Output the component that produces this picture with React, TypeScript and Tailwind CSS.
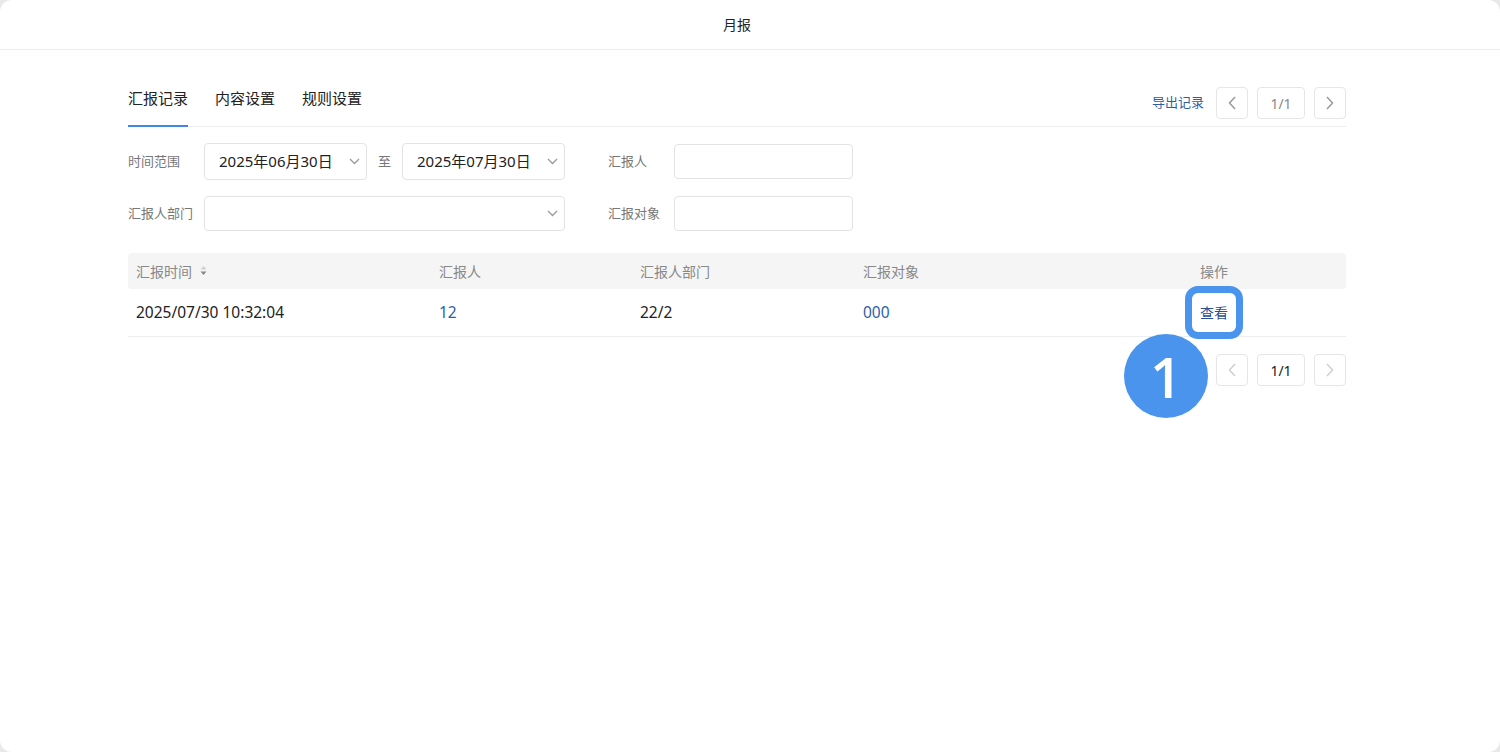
import React from "react";

const font = { fontFamily: '"Noto Sans", "Noto Sans CJK SC", sans-serif' };

function Chevron({ dir, color }: { dir: "left" | "right" | "down"; color: string }) {
  if (dir === "down") {
    return (
      <svg width="11" height="7" viewBox="0 0 11 7" fill="none">
        <path d="M1 1l4.5 4.5L10 1" stroke={color} strokeWidth="1.3" />
      </svg>
    );
  }
  return (
    <svg width="8" height="14" viewBox="0 0 8 14" fill="none">
      {dir === "left" ? (
        <path d="M7 1L1.5 7 7 13" stroke={color} strokeWidth="1.5" />
      ) : (
        <path d="M1 1l5.5 6L1 13" stroke={color} strokeWidth="1.5" />
      )}
    </svg>
  );
}

function Pager({ textColor, chevColor }: { textColor: string; chevColor: string }) {
  return (
    <div className="flex items-center gap-[9px]">
      <div className="w-[32px] h-[32px] border border-[#e6e6e6] rounded-[4px] flex items-center justify-center">
        <Chevron dir="left" color={chevColor} />
      </div>
      <div className={`w-[48px] h-[32px] border border-[#e6e6e6] rounded-[4px] flex items-center justify-center text-[14px] ${textColor}`}>
        1/1
      </div>
      <div className="w-[32px] h-[32px] border border-[#e6e6e6] rounded-[4px] flex items-center justify-center">
        <Chevron dir="right" color={chevColor} />
      </div>
    </div>
  );
}

export default function App() {
  return (
    <div className="w-[1500px] h-[752px] bg-[#e9e9e9]" style={font}>
      <div className="w-full h-full bg-white rounded-[12px] overflow-hidden">
        <div className="h-[50px] border-b border-[#ececec] flex items-center justify-center pr-[26px] text-[14px] text-[#222]">
          月报
        </div>
        <div className="pl-[128px] pr-[154px] pt-[37px]">
          <div className="flex items-start justify-between border-b border-[#eeeeee]">
            <div className="flex gap-[27px]">
              <div className="text-[15px] leading-[22px] pb-[16px] text-[#222] border-b-2 border-[#3f86ee] -mb-px">汇报记录</div>
              <div className="text-[15px] leading-[22px] pb-[16px] text-[#222]">内容设置</div>
              <div className="text-[15px] leading-[22px] pb-[16px] text-[#222]">规则设置</div>
            </div>
            <div className="flex items-center">
              <span className="text-[13px] text-[#2d5fa8] mr-[12px]">导出记录</span>
              <Pager textColor="text-[#888]" chevColor="#9a9a9a" />
            </div>
          </div>

          <div className="mt-[16px] flex items-center">
            <div className="w-[76px] text-[13px] text-[#777]">时间范围</div>
            <div className="w-[163px] h-[37px] border border-[#e3e3e3] rounded-[4px] flex items-center justify-between pl-[14px] pr-[6px] text-[15px] text-[#222]">
              <span>2025年06月30日</span>
              <Chevron dir="down" color="#999" />
            </div>
            <div className="w-[35px] text-center text-[13px] text-[#777]">至</div>
            <div className="w-[163px] h-[37px] border border-[#e3e3e3] rounded-[4px] flex items-center justify-between pl-[14px] pr-[6px] text-[15px] text-[#222]">
              <span>2025年07月30日</span>
              <Chevron dir="down" color="#999" />
            </div>
            <div className="w-[43px]" />
            <div className="w-[66px] text-[13px] text-[#777]">汇报人</div>
            <div className="w-[179px] h-[35px] border border-[#e3e3e3] rounded-[4px]" />
          </div>

          <div className="mt-[16px] flex items-center">
            <div className="w-[76px] text-[13px] text-[#777]">汇报人部门</div>
            <div className="w-[361px] h-[35px] border border-[#e3e3e3] rounded-[4px] flex items-center justify-end pr-[6px]">
              <Chevron dir="down" color="#999" />
            </div>
            <div className="w-[43px]" />
            <div className="w-[66px] text-[13px] text-[#777]">汇报对象</div>
            <div className="w-[179px] h-[35px] border border-[#e3e3e3] rounded-[4px]" />
          </div>

          <div className="mt-[22px]">
            <div className="grid grid-cols-[303px_201px_223px_227px_1fr] h-[36px] bg-[#f5f5f5] rounded-[4px] items-center text-[14px] text-[#888]">
              <div className="pl-[8px] flex items-center gap-[8px]">
                <span>汇报时间</span>
                <svg width="7" height="12" viewBox="0 0 7 12">
                  <path d="M3.5 1L6.5 4.5H0.5Z" fill="#d0d0d0" />
                  <path d="M3.5 10L6.5 6.5H0.5Z" fill="#888" />
                </svg>
              </div>
              <div className="pl-[8px]">汇报人</div>
              <div className="pl-[8px]">汇报人部门</div>
              <div className="pl-[8px]">汇报对象</div>
              <div className="text-center">操作</div>
            </div>
            <div className="grid grid-cols-[303px_201px_223px_227px_1fr] h-[48px] border-b border-[#eeeeee] items-center text-[15.5px]">
              <div className="pl-[8px] text-[#222]">2025/07/30 10:32:04</div>
              <div className="pl-[8px] text-[#2d5fa8]">12</div>
              <div className="pl-[8px] text-[#222]">22/2</div>
              <div className="pl-[8px] text-[#2d5fa8]">000</div>
              <div className="flex justify-center">
                <div className="relative text-[14px] leading-[20px] text-[#2a4f8f]">
                  查看
                  <div className="absolute left-[-15px] right-[-15px] top-[-17px] bottom-[-16px] border-[7px] border-[#4a94ee] rounded-[13px]" />
                </div>
              </div>
            </div>
          </div>

          <div className="mt-[17px] flex justify-end relative">
            <Pager textColor="text-[#222]" chevColor="#cfcfcf" />
            <div className="absolute left-[996px] top-[-20px] w-[84px] h-[84px] rounded-full bg-[#4a94ee] flex items-center justify-center text-white text-[56px] font-semibold leading-none" style={{ fontFamily: '"Open Sans", Arial, sans-serif' }}>
              1
            </div>
          </div>
        </div>
      </div>
    </div>
  );
}
